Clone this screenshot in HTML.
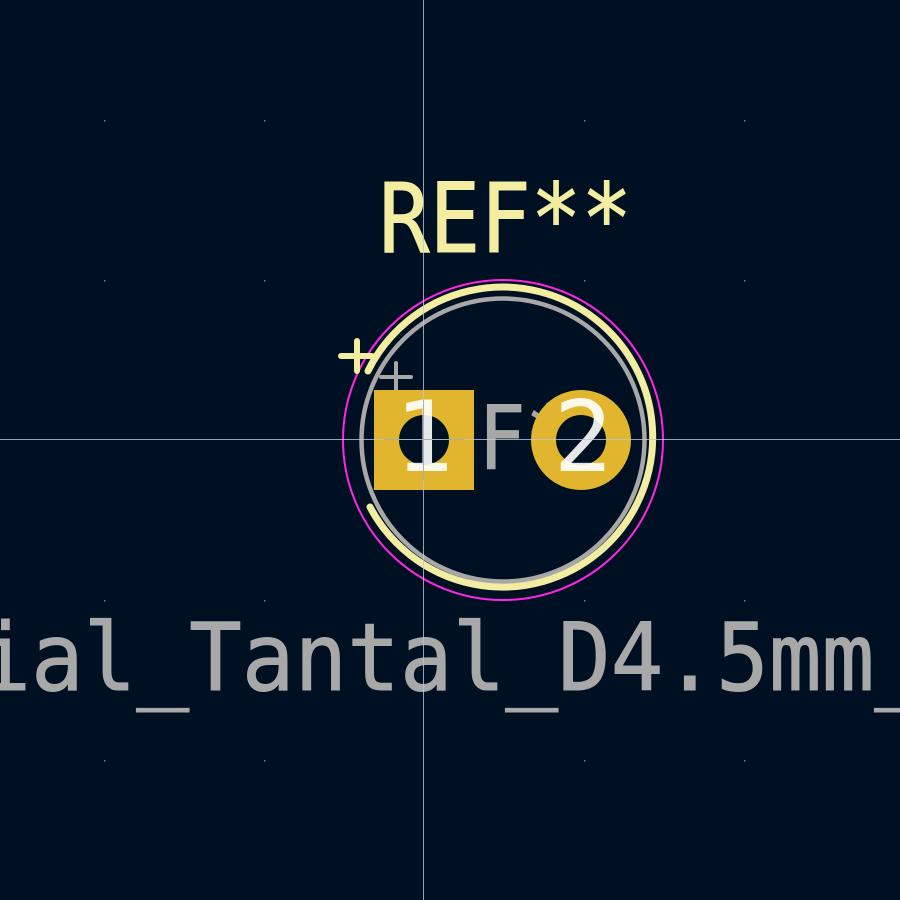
<!DOCTYPE html>
<html><head><meta charset="utf-8"><style>
html,body{margin:0;padding:0;background:#001023;width:900px;height:900px;overflow:hidden}
svg{display:block}
text{font-family:"DejaVu Sans Mono","Liberation Mono",monospace}
</style></head><body>
<svg width="900" height="900" viewBox="0 0 900 900" xmlns="http://www.w3.org/2000/svg">
<rect width="900" height="900" fill="#001023"/>
<g fill="#6a7a8a">
<rect x="104" y="120" width="1.5" height="1.5"/><rect x="264" y="120" width="1.5" height="1.5"/><rect x="584" y="120" width="1.5" height="1.5"/><rect x="744" y="120" width="1.5" height="1.5"/>
<rect x="104" y="280" width="1.5" height="1.5"/><rect x="264" y="280" width="1.5" height="1.5"/><rect x="584" y="280" width="1.5" height="1.5"/><rect x="744" y="280" width="1.5" height="1.5"/>
<rect x="104" y="600" width="1.5" height="1.5"/><rect x="264" y="600" width="1.5" height="1.5"/><rect x="584" y="600" width="1.5" height="1.5"/><rect x="744" y="600" width="1.5" height="1.5"/>
<rect x="104" y="760" width="1.5" height="1.5"/><rect x="264" y="760" width="1.5" height="1.5"/><rect x="584" y="760" width="1.5" height="1.5"/><rect x="744" y="760" width="1.5" height="1.5"/>
</g>
<text x="-338" y="690" font-size="94" textLength="1634" lengthAdjust="spacingAndGlyphs" fill="#a8a8a8" stroke="#a8a8a8" stroke-width="1">CP_Radial_Tantal_D4.5mm_P5.00mm</text>
<text x="379" y="252" font-size="96" textLength="253" lengthAdjust="spacingAndGlyphs" fill="#f2eda1" stroke="#f2eda1" stroke-width="1">REF**</text>
<circle cx="503" cy="440" r="141.5" fill="none" stroke="#a8a8a8" stroke-width="4.5"/>
<circle cx="503" cy="440" r="160" fill="none" stroke="#ff26e2" stroke-width="2"/>
<path d="M370 507 A150 150 0 1 0 368 371" fill="none" stroke="#f2eda1" stroke-width="7" stroke-linecap="round"/>
<path d="M341 356 H372 M357 341 V371" stroke="#f2eda1" stroke-width="6" stroke-linecap="round"/>
<path d="M381 377 H411 M396 363 V392" stroke="#a8a8a8" stroke-width="4" stroke-linecap="round"/>
<text x="502" y="469" font-size="88" text-anchor="middle" textLength="235" lengthAdjust="spacingAndGlyphs" fill="#a8a8a8" stroke="#a8a8a8" stroke-width="1">REF**</text>
<rect x="374" y="390" width="100" height="100" fill="#e2b52e"/>
<circle cx="581" cy="440" r="50" fill="#e2b52e"/>
<circle cx="424" cy="440" r="25" fill="#001023"/>
<circle cx="581" cy="440" r="25" fill="#001023"/>
<text x="424" y="471" font-size="98" text-anchor="middle" fill="#ffffff" fill-opacity="0.9">1</text>
<text x="583" y="471" font-size="98" text-anchor="middle" fill="#ffffff" fill-opacity="0.9">2</text>
<path d="M384 439.5 H464 M423.5 400 V480" stroke="#555" stroke-width="1"/>
<path d="M0 439.5 H900 M423.5 0 V900" stroke="#b8c8d8" stroke-width="1" opacity="0.8"/>
</svg>
</body></html>
